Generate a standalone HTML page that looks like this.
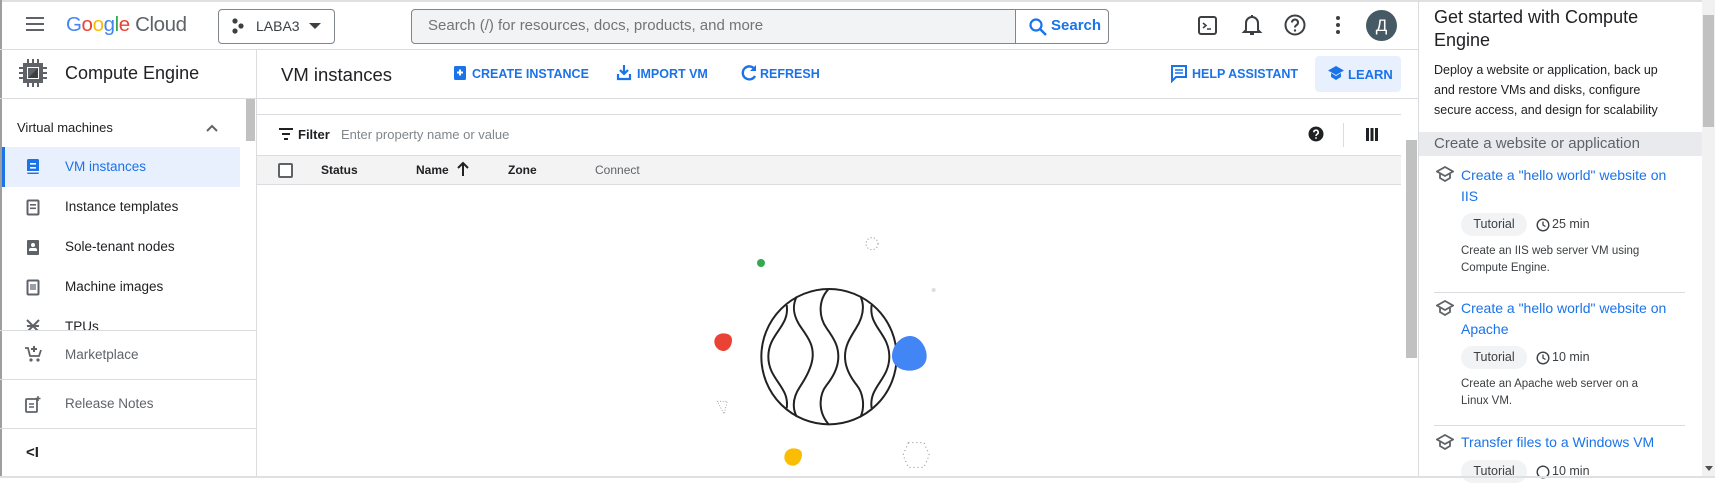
<!DOCTYPE html>
<html><head><meta charset="utf-8"><style>
*{box-sizing:border-box;margin:0;padding:0}
body{width:1715px;height:478px;overflow:hidden;background:#fff;font-family:"Liberation Sans",Arial,sans-serif;color:#202124;position:relative}
.a{position:absolute}
.t{position:absolute;white-space:nowrap}
.blue{color:#1a73e8}
.btn{font-size:12.5px;font-weight:bold;color:#1a73e8;letter-spacing:0}
.nav{font-size:13.5px;color:#202124}
.hl{border-top:1px solid #dadce0;position:absolute}
</style></head><body>
<div class="a" style="left:0;top:0;width:1715px;height:2px;background:#e0e0e0"></div>
<div class="a" style="left:0;top:0;width:2px;height:478px;background:#9e9e9e"></div>

<div class="hl" style="left:0;top:49px;width:1419px"></div>
<svg class="a" style="left:25px;top:16px" width="20" height="16"><rect x="1" y="1" width="18" height="2" fill="#5f6368"/><rect x="1" y="7" width="18" height="2" fill="#5f6368"/><rect x="1" y="13" width="18" height="2" fill="#5f6368"/></svg>
<div class="t" style="left:66px;top:13px;font-size:20.5px;letter-spacing:-.4px"><span style="color:#4285f4">G</span><span style="color:#ea4335">o</span><span style="color:#fbbc04">o</span><span style="color:#4285f4">g</span><span style="color:#34a853">l</span><span style="color:#ea4335">e</span> <span style="color:#5f6368">Cloud</span></div>
<div class="a" style="left:218px;top:9px;width:117px;height:35px;border:1px solid #80868b;border-radius:4px"></div>
<svg class="a" style="left:231px;top:18px" width="14" height="16"><circle cx="4" cy="3" r="2.6" fill="#3c4043"/><circle cx="10" cy="8" r="2.6" fill="#3c4043"/><circle cx="4" cy="13" r="2.6" fill="#3c4043"/></svg>
<div class="t" style="left:256px;top:18px;font-size:14px;color:#3c4043">LABA3</div>
<svg class="a" style="left:308px;top:22px" width="14" height="8"><path d="M1 1h12L7 7z" fill="#3c4043"/></svg>
<div class="a" style="left:411px;top:9px;width:698px;height:35px;border:1px solid #80868b;border-radius:4px;background:#f1f3f4"></div>
<div class="a" style="left:1015px;top:10px;width:93px;height:33px;background:#fff;border-left:1px solid #80868b;border-radius:0 4px 4px 0"></div>
<div class="t" style="left:428px;top:17px;font-size:15px;color:#70757a">Search (/) for resources, docs, products, and more</div>
<svg class="a" style="left:1028px;top:17px" width="20" height="20"><circle cx="8" cy="8" r="5.5" fill="none" stroke="#1a73e8" stroke-width="2.2"/><path d="M12 12l6 6" stroke="#1a73e8" stroke-width="2.4"/></svg>
<div class="t" style="left:1051px;top:17px;font-size:15px;color:#1a73e8;font-weight:bold">Search</div>
<svg class="a" style="left:1197px;top:14px" width="22" height="22"><rect x="2" y="3" width="17" height="17" rx="2" fill="none" stroke="#3c4043" stroke-width="2"/><path d="M6 9l3 2.5-3 2.5M10 15h4" stroke="#3c4043" stroke-width="1.6" fill="none"/></svg>
<svg class="a" style="left:1241px;top:13px" width="22" height="24"><path d="M5 17V10a6 6 0 0 1 12 0v7l2 2H3z" fill="none" stroke="#3c4043" stroke-width="2"/><path d="M9 21h4" stroke="#3c4043" stroke-width="2"/><path d="M11 2v2" stroke="#3c4043" stroke-width="2"/></svg>
<svg class="a" style="left:1283px;top:13px" width="24" height="24"><circle cx="12" cy="12" r="9.5" fill="none" stroke="#3c4043" stroke-width="2"/><path d="M9 9.5a3 3 0 1 1 4.5 2.6c-1 .6-1.5 1.2-1.5 2.4" fill="none" stroke="#3c4043" stroke-width="2"/><circle cx="12" cy="17.5" r="1.2" fill="#3c4043"/></svg>
<svg class="a" style="left:1334px;top:15px" width="8" height="20"><circle cx="4" cy="3" r="2" fill="#3c4043"/><circle cx="4" cy="10" r="2" fill="#3c4043"/><circle cx="4" cy="17" r="2" fill="#3c4043"/></svg>
<div class="a" style="left:1366px;top:10px;width:31px;height:31px;border-radius:50%;background:#455a64;color:#fff;font-size:17px;text-align:center;line-height:31px">Д</div>

<div class="a" style="left:256px;top:49px;width:1px;height:429px;background:#dadce0"></div>
<svg class="a" style="left:18px;top:58px" width="30" height="30"><rect x="5" y="5" width="20" height="20" fill="#5f6368"/><rect x="9" y="9" width="12" height="12" fill="#fff"/><rect x="10" y="10" width="10" height="10" fill="#5f6368"/><path d="M10 20L20 10V20z" fill="#3c4043"/><g fill="#5f6368"><rect x="9" y="1" width="2" height="4"/><rect x="14" y="1" width="2" height="4"/><rect x="19" y="1" width="2" height="4"/><rect x="9" y="25" width="2" height="4"/><rect x="14" y="25" width="2" height="4"/><rect x="19" y="25" width="2" height="4"/><rect x="1" y="9" width="4" height="2"/><rect x="1" y="14" width="4" height="2"/><rect x="1" y="19" width="4" height="2"/><rect x="25" y="9" width="4" height="2"/><rect x="25" y="14" width="4" height="2"/><rect x="25" y="19" width="4" height="2"/></g></svg>
<div class="t" style="left:65px;top:63px;font-size:18px;color:#202124">Compute Engine</div>
<div class="hl" style="left:0;top:98px;width:256px"></div>
<div class="a" style="left:246px;top:99px;width:9px;height:42px;background:#c1c1c1"></div>
<div class="t" style="left:17px;top:120px;font-size:13px">Virtual machines</div>
<svg class="a" style="left:206px;top:124px" width="12" height="8"><path d="M1 7l5-5 5 5" fill="none" stroke="#5f6368" stroke-width="2"/></svg>
<div class="a" style="left:2px;top:147px;width:238px;height:40px;background:#e8f0fe"></div>
<div class="a" style="left:2px;top:147px;width:3px;height:40px;background:#1a73e8"></div>
<svg class="a" style="left:26px;top:158px" width="14" height="18"><rect x="1" y="1" width="12" height="15" rx="1.5" fill="#1a73e8"/><rect x="4" y="5" width="6" height="1.6" fill="#fff"/><rect x="4" y="9" width="6" height="1.6" fill="#fff"/><rect x="1" y="13" width="12" height="1.5" fill="#fff"/></svg>
<div class="t nav" style="left:65px;top:159px;color:#1a73e8">VM instances</div>
<svg class="a" style="left:26px;top:199px" width="14" height="18"><rect x="1.5" y="1.5" width="11" height="14" rx="1" fill="none" stroke="#5f6368" stroke-width="2"/><rect x="4" y="5" width="6" height="1.6" fill="#5f6368"/><rect x="4" y="8.5" width="6" height="1.6" fill="#5f6368"/></svg>
<div class="t nav" style="left:65px;top:199px">Instance templates</div>
<svg class="a" style="left:26px;top:239px" width="14" height="18"><rect x="1" y="1" width="12" height="15" rx="1" fill="#5f6368"/><circle cx="7" cy="6" r="2" fill="#fff"/><path d="M3 12h8v-1a2 2 0 0 0-2-2H5a2 2 0 0 0-2 2z" fill="#fff"/></svg>
<div class="t nav" style="left:65px;top:239px">Sole-tenant nodes</div>
<svg class="a" style="left:26px;top:279px" width="14" height="18"><rect x="1.5" y="1.5" width="11" height="14" rx="1" fill="none" stroke="#5f6368" stroke-width="2"/><rect x="4" y="5" width="6" height="6" fill="#9aa0a6"/></svg>
<div class="t nav" style="left:65px;top:279px">Machine images</div>
<div class="a" style="left:2px;top:314px;width:254px;height:16px;overflow:hidden"><svg class="a" style="left:24px;top:5px" width="14" height="14"><path d="M1 1l12 12M13 1L1 13M1 7h12" stroke="#5f6368" stroke-width="2"/></svg><div class="t nav" style="left:63px;top:5px">TPUs</div></div>
<div class="hl" style="left:0;top:330px;width:256px"></div>
<svg class="a" style="left:24px;top:345px" width="18" height="18"><path d="M1 3h3l2 8h9l2-6" fill="none" stroke="#5f6368" stroke-width="1.8"/><circle cx="7" cy="15" r="1.6" fill="#5f6368"/><circle cx="14" cy="15" r="1.6" fill="#5f6368"/><path d="M10 1v6M7 4h6" stroke="#5f6368" stroke-width="2"/></svg>
<div class="t nav" style="left:65px;top:347px;color:#5f6368">Marketplace</div>
<div class="hl" style="left:0;top:379px;width:256px"></div>
<svg class="a" style="left:24px;top:395px" width="18" height="18"><rect x="2" y="4" width="11" height="13" rx="1" fill="none" stroke="#5f6368" stroke-width="1.8"/><path d="M5 9h5M5 12h5" stroke="#5f6368" stroke-width="1.5"/><path d="M14 1v5M11.5 3.5h5" stroke="#5f6368" stroke-width="1.5"/></svg>
<div class="t nav" style="left:65px;top:396px;color:#5f6368">Release Notes</div>
<div class="hl" style="left:0;top:428px;width:256px"></div>
<div class="t" style="left:26px;top:444px;font-size:15px;font-weight:bold;color:#202124">&lt;I</div>

<div class="t" style="left:281px;top:64px;font-size:18.5px">VM instances</div>
<svg class="a" style="left:453px;top:65px" width="14" height="16"><rect x="1" y="1" width="12" height="14" rx="1.5" fill="#1a73e8"/><path d="M7 4.5v6M4 7.5h6" stroke="#fff" stroke-width="2"/></svg>
<div class="t btn" style="left:472px;top:67px">CREATE INSTANCE</div>
<svg class="a" style="left:616px;top:64px" width="16" height="17"><path d="M8 1v9M4 6l4 4 4-4" fill="none" stroke="#1a73e8" stroke-width="2.2"/><path d="M2 10v5h12v-5" fill="none" stroke="#1a73e8" stroke-width="2.2"/></svg>
<div class="t btn" style="left:637px;top:67px">IMPORT VM</div>
<svg class="a" style="left:740px;top:64px" width="18" height="18"><path d="M14.5 5A6.5 6.5 0 1 0 15 12" fill="none" stroke="#1a73e8" stroke-width="2.4"/><path d="M16 1v6h-6z" fill="#1a73e8"/></svg>
<div class="t btn" style="left:760px;top:67px">REFRESH</div>
<svg class="a" style="left:1170px;top:64px" width="18" height="20"><path d="M2 2h14v11H6l-4 4z" fill="none" stroke="#1a73e8" stroke-width="2"/><path d="M5 6h8M5 9h8" stroke="#1a73e8" stroke-width="1.6"/></svg>
<div class="t btn" style="left:1192px;top:67px">HELP ASSISTANT</div>
<div class="a" style="left:1315px;top:56px;width:86px;height:36px;background:#e8f0fe;border-radius:4px"></div>
<svg class="a" style="left:1327px;top:65px" width="18" height="16"><path d="M9 1L1 5.5 9 10l8-4.5z" fill="#1a73e8"/><path d="M4 8v4l5 3 5-3V8l-5 3z" fill="#1a73e8"/></svg>
<div class="t btn" style="left:1348px;top:67px;font-size:13px">LEARN</div>
<div class="hl" style="left:257px;top:98px;width:1162px"></div>
<div class="hl" style="left:257px;top:114px;width:1144px"></div>

<svg class="a" style="left:278px;top:128px" width="16" height="12"><path d="M1 1h14M4 6h8M6 11h4" stroke="#202124" stroke-width="2"/></svg>
<div class="t" style="left:298px;top:127px;font-size:13px;font-weight:bold">Filter</div>
<div class="t" style="left:341px;top:127px;font-size:13px;color:#80868b">Enter property name or value</div>
<svg class="a" style="left:1308px;top:126px" width="16" height="16"><circle cx="8" cy="8" r="7.5" fill="#202124"/><path d="M5.8 6.3a2.2 2.2 0 1 1 3.2 2c-.7.4-1 .8-1 1.7" fill="none" stroke="#fff" stroke-width="1.6"/><circle cx="8" cy="12" r=".9" fill="#fff"/></svg>
<div class="a" style="left:1343px;top:123px;width:1px;height:24px;background:#dadce0"></div>
<svg class="a" style="left:1366px;top:128px" width="12" height="13"><rect x="0" y="0" width="3" height="13" fill="#202124"/><rect x="4.5" y="0" width="3" height="13" fill="#202124"/><rect x="9" y="0" width="3" height="13" fill="#202124"/></svg>

<div class="a" style="left:257px;top:155px;width:1144px;height:30px;background:#f3f3f3;border-top:1px solid #dadce0;border-bottom:1px solid #dadce0"></div>
<div class="a" style="left:278px;top:163px;width:15px;height:15px;border:2px solid #5f6368;border-radius:2px;background:#fff"></div>
<div class="t" style="left:321px;top:163px;font-size:12px;font-weight:bold">Status</div>
<div class="t" style="left:416px;top:163px;font-size:12px;font-weight:bold">Name</div>
<svg class="a" style="left:456px;top:161px" width="14" height="16"><path d="M7 15V2M2 7l5-5 5 5" fill="none" stroke="#202124" stroke-width="2"/></svg>
<div class="t" style="left:508px;top:163px;font-size:12px;font-weight:bold">Zone</div>
<div class="t" style="left:595px;top:163px;font-size:12px;color:#5f6368">Connect</div>

<div class="a" style="left:1406px;top:140px;width:11px;height:218px;background:#c1c1c1"></div>
<div class="a" style="left:1418px;top:0;width:1px;height:478px;background:#dadce0"></div>

<svg class="a" style="left:650px;top:200px" width="450" height="278" viewBox="0 0 1350 834">
<g fill="none" stroke="#222" stroke-width="6">
<circle cx="537" cy="470" r="203"/>
<path d="M410 315C420 380 355 400 355 470S420 560 410 625"/>
<path d="M440 290C425 320 430 350 455 385S490 440 488 470 470 530 450 560 425 620 440 650"/>
<path d="M535 268C505 300 505 350 530 385S565 440 565 470 550 530 530 555 500 630 535 672"/>
<path d="M632 290C645 320 640 350 618 385S585 440 585 470 600 530 620 555 645 620 632 650"/>
<path d="M665 315C655 380 718 400 718 470S655 560 665 625"/>
</g>
<path d="M780 408c30 0 50 35 50 60 0 30-25 44-52 44-30 0-52-18-52-44 0-30 25-60 54-60z" fill="#4285f4"/>
<path d="M220 400c15 0 26 6 26 20 0 18-12 33-26 33-15 0-27-14-27-28 0-15 12-25 27-25z" fill="#ea4335"/>
<circle cx="333" cy="189" r="12" fill="#34a853"/>
<path d="M430 745c16 0 26 6 26 18 0 18-13 34-27 34-15 0-26-12-26-25 0-17 12-27 27-27z" fill="#fbbc04"/>
<circle cx="666" cy="131" r="18" fill="none" stroke="#888" stroke-width="3" stroke-dasharray="3 7"/>
<path d="M775 728h47l16 37-16 37h-47l-16-37z" fill="none" stroke="#888" stroke-width="3" stroke-dasharray="3 9"/>
<circle cx="851" cy="270" r="6" fill="#ddd"/>
<path d="M202 604h30l-10 38z" fill="none" stroke="#999" stroke-width="2.5" stroke-dasharray="3 5"/>
</svg>

<div class="t" style="left:1434px;top:6px;font-size:18px;line-height:23px;white-space:normal;width:235px;color:#202124">Get started with Compute Engine</div>
<div class="t" style="left:1434px;top:60px;font-size:12.5px;line-height:20px;white-space:normal;width:240px;color:#202124">Deploy a website or application, back up and restore VMs and disks, configure secure access, and design for scalability</div>
<div class="a" style="left:1419px;top:132px;width:283px;height:24px;background:#e8eaed"></div>
<div class="t" style="left:1434px;top:135px;font-size:15px;color:#5f6368">Create a website or application</div>
<div class="a" style="left:1702px;top:0;width:13px;height:478px;background:#f1f1f1"></div>
<div class="a" style="left:1703px;top:15px;width:11px;height:112px;background:#c1c1c1"></div>
<svg class="a" style="left:1705px;top:466px" width="8" height="6"><path d="M0 0h8L4 5z" fill="#505050"/></svg>

<svg class="a" style="left:1436px;top:166px" width="18" height="16"><path d="M9 1L1 5.5 9 10l8-4.5z" fill="none" stroke="#5f6368" stroke-width="1.8"/><path d="M4 8v4l5 3 5-3V8" fill="none" stroke="#5f6368" stroke-width="1.8"/></svg>
<div class="t blue" style="left:1461px;top:165px;font-size:14px;line-height:21px;white-space:normal;width:215px">Create a "hello world" website on IIS</div>
<div class="a" style="left:1461px;top:213px;width:66px;height:23px;background:#f1f3f4;border-radius:12px;font-size:12.5px;color:#3c4043;text-align:center;line-height:23px">Tutorial</div>
<svg class="a" style="left:1536px;top:218px" width="14" height="14"><circle cx="7" cy="7" r="5.8" fill="none" stroke="#3c4043" stroke-width="1.4"/><path d="M7 3.5V7l2.5 1.5" fill="none" stroke="#3c4043" stroke-width="1.3"/></svg>
<div class="t" style="left:1552px;top:217px;font-size:12.5px;color:#3c4043">25 min</div>
<div class="t" style="left:1461px;top:243px;font-size:11.5px;line-height:16.5px;white-space:normal;width:200px;color:#3c4043">Create an IIS web server VM using Compute Engine.</div>
<div class="hl" style="left:1434px;top:292px;width:251px"></div>

<svg class="a" style="left:1436px;top:300px" width="18" height="16"><path d="M9 1L1 5.5 9 10l8-4.5z" fill="none" stroke="#5f6368" stroke-width="1.8"/><path d="M4 8v4l5 3 5-3V8" fill="none" stroke="#5f6368" stroke-width="1.8"/></svg>
<div class="t blue" style="left:1461px;top:298px;font-size:14px;line-height:21px;white-space:normal;width:215px">Create a "hello world" website on Apache</div>
<div class="a" style="left:1461px;top:346px;width:66px;height:23px;background:#f1f3f4;border-radius:12px;font-size:12.5px;color:#3c4043;text-align:center;line-height:23px">Tutorial</div>
<svg class="a" style="left:1536px;top:351px" width="14" height="14"><circle cx="7" cy="7" r="5.8" fill="none" stroke="#3c4043" stroke-width="1.4"/><path d="M7 3.5V7l2.5 1.5" fill="none" stroke="#3c4043" stroke-width="1.3"/></svg>
<div class="t" style="left:1552px;top:350px;font-size:12.5px;color:#3c4043">10 min</div>
<div class="t" style="left:1461px;top:376px;font-size:11.5px;line-height:16.5px;white-space:normal;width:195px;color:#3c4043">Create an Apache web server on a Linux VM.</div>
<div class="hl" style="left:1434px;top:425px;width:251px"></div>

<svg class="a" style="left:1436px;top:434px" width="18" height="16"><path d="M9 1L1 5.5 9 10l8-4.5z" fill="none" stroke="#5f6368" stroke-width="1.8"/><path d="M4 8v4l5 3 5-3V8" fill="none" stroke="#5f6368" stroke-width="1.8"/></svg>
<div class="t blue" style="left:1461px;top:432px;font-size:14px;line-height:21px">Transfer files to a Windows VM</div>
<div class="a" style="left:1461px;top:460px;width:66px;height:23px;background:#f1f3f4;border-radius:12px;font-size:12.5px;color:#3c4043;text-align:center;line-height:23px">Tutorial</div>
<svg class="a" style="left:1536px;top:465px" width="14" height="14"><circle cx="7" cy="7" r="5.8" fill="none" stroke="#3c4043" stroke-width="1.4"/></svg>
<div class="t" style="left:1552px;top:464px;font-size:12.5px;color:#3c4043">10 min</div>
<div class="a" style="left:0;top:476px;width:1715px;height:2px;background:#e0e0e0"></div>
</body></html>
